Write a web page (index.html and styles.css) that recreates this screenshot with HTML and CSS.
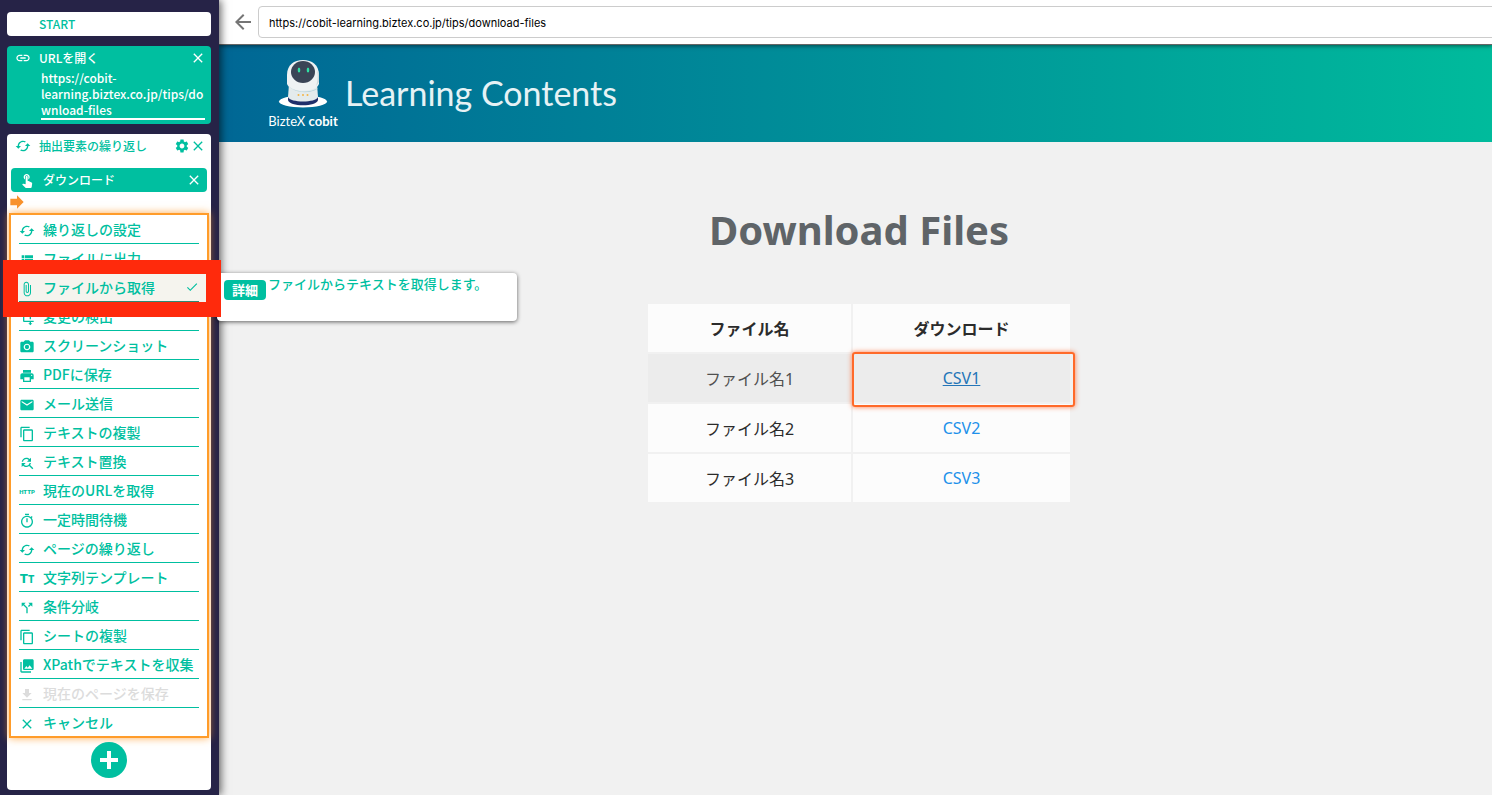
FILE: index.html
```html
<!DOCTYPE html>
<html lang="ja">
<head>
    <meta charset="utf-8">
    <meta name="viewport" content="width=device-width, initial-scale=1">
    <title>BizteX cobit</title>
    <link rel="stylesheet" href="styles.css">
</head>
<body>

<svg class="sprite" aria-hidden="true">
    <symbol id="link" viewBox="0 0 24 24"><path d="M3.9 12c0-1.71 1.39-3.1 3.1-3.1h4V7H7c-2.76 0-5 2.24-5 5s2.24 5 5 5h4v-1.9H7c-1.71 0-3.1-1.39-3.1-3.1zM8 13h8v-2H8v2zm9-6h-4v1.9h4c1.71 0 3.1 1.39 3.1 3.1s-1.39 3.1-3.1 3.1h-4V17h4c2.76 0 5-2.24 5-5s-2.24-5-5-5z"/></symbol>
    <symbol id="close" viewBox="0 0 24 24"><path d="M19 6.41L17.59 5 12 10.59 6.41 5 5 6.41 10.59 12 5 17.59 6.41 19 12 13.41 17.59 19 19 17.59 13.41 12z"/></symbol>
    <symbol id="cached" viewBox="0 0 24 24"><path d="M19 8l-4 4h3c0 3.31-2.69 6-6 6-1.01 0-1.97-.25-2.8-.7l-1.46 1.46C8.97 19.54 10.43 20 12 20c4.42 0 8-3.58 8-8h3l-4-4zM6 12c0-3.31 2.69-6 6-6 1.01 0 1.97.25 2.8.7l1.46-1.46C15.03 4.46 13.57 4 12 4c-4.42 0-8 3.58-8 8H1l4 4 4-4H6z"/></symbol>
    <symbol id="settings" viewBox="0 0 24 24"><path d="M19.14 12.94c.04-.3.06-.61.06-.94 0-.32-.02-.64-.07-.94l2.03-1.58c.18-.14.23-.41.12-.61l-1.92-3.32c-.12-.22-.37-.29-.59-.22l-2.39.96c-.5-.38-1.03-.7-1.62-.94l-.36-2.54c-.04-.24-.24-.41-.48-.41h-3.84c-.24 0-.43.17-.47.41l-.36 2.54c-.59.24-1.13.57-1.62.94l-2.39-.96c-.22-.08-.47 0-.59.22L2.74 8.87c-.12.21-.08.47.12.61l2.03 1.58c-.05.3-.09.63-.09.94s.02.64.07.94l-2.03 1.58c-.18.14-.23.41-.12.61l1.92 3.32c.12.22.37.29.59.22l2.39-.96c.5.38 1.03.7 1.62.94l.36 2.54c.05.24.24.41.48.41h3.84c.24 0 .44-.17.47-.41l.36-2.54c.59-.24 1.13-.56 1.62-.94l2.39.96c.22.08.47 0 .59-.22l1.92-3.32c.12-.22.07-.47-.12-.61l-2.01-1.58zM12 15.6c-1.98 0-3.6-1.62-3.6-3.6s1.62-3.6 3.6-3.6 3.6 1.62 3.6 3.6-1.62 3.6-3.6 3.6z"/></symbol>
    <symbol id="touch" viewBox="0 0 24 24"><path d="M9 11.24V7.5C9 6.12 10.12 5 11.5 5S14 6.12 14 7.5v3.74c1.21-.81 2-2.18 2-3.74C16 5.01 13.99 3 11.5 3S7 5.01 7 7.5c0 1.56.79 2.93 2 3.74zm9.84 4.63l-4.54-2.26c-.17-.07-.35-.11-.54-.11H13v-6c0-.83-.67-1.5-1.5-1.5S10 6.67 10 7.5v10.74l-3.43-.72c-.08-.01-.15-.03-.24-.03-.31 0-.59.13-.79.33l-.79.8 4.94 4.94c.27.27.65.44 1.06.44h6.79c.75 0 1.33-.55 1.44-1.28l.75-5.27c.01-.07.02-.14.02-.2 0-.62-.38-1.16-.91-1.38z"/></symbol>
    <symbol id="forward" viewBox="0 0 24 24"><path d="M12 8V4l8 8-8 8v-4H4V8z"/></symbol>
    <symbol id="list" viewBox="0 0 24 24"><path d="M4 14h4v-4H4v4zm0 5h4v-4H4v4zM4 9h4V5H4v4zm5 5h12v-4H9v4zm0 5h12v-4H9v4zM9 5v4h12V5H9z"/></symbol>
    <symbol id="attach" viewBox="0 0 24 24"><path d="M16.5 6v11.5c0 2.21-1.79 4-4 4s-4-1.79-4-4V5c0-1.38 1.12-2.5 2.5-2.5s2.5 1.12 2.5 2.5v10.5c0 .55-.45 1-1 1s-1-.45-1-1V6H10v9.5c0 1.38 1.12 2.5 2.5 2.5s2.5-1.12 2.5-2.5V5c0-2.21-1.79-4-4-4S7 2.79 7 5v12.5c0 3.04 2.46 5.5 5.5 5.5s5.5-2.46 5.5-5.5V6h-1.5z"/></symbol>
    <symbol id="check" viewBox="0 0 24 24"><path d="M9 16.17L4.83 12l-1.42 1.41L9 19 21 7l-1.41-1.41z"/></symbol>
    <symbol id="transform" viewBox="0 0 24 24"><path d="M22 18v-2H8V4h2L7 1 4 4h2v2H2v2h4v8c0 1.1.9 2 2 2h8v2h-2l3 3 3-3h-2v-2h4zM10 8h6v6h2V8c0-1.1-.9-2-2-2h-6v2z"/></symbol>
    <symbol id="camera" viewBox="0 0 24 24"><circle cx="12" cy="12" r="3.2"/><path d="M9 2L7.17 4H4c-1.1 0-2 .9-2 2v12c0 1.1.9 2 2 2h16c1.1 0 2-.9 2-2V6c0-1.1-.9-2-2-2h-3.17L15 2H9zm3 15c-2.76 0-5-2.24-5-5s2.24-5 5-5 5 2.24 5 5-2.24 5-5 5z"/></symbol>
    <symbol id="print" viewBox="0 0 24 24"><path d="M19 8H5c-1.66 0-3 1.34-3 3v6h4v4h12v-4h4v-6c0-1.66-1.34-3-3-3zm-3 11H8v-5h8v5zm3-7c-.55 0-1-.45-1-1s.45-1 1-1 1 .45 1 1-.45 1-1 1zm-1-9H6v4h12V3z"/></symbol>
    <symbol id="mail" viewBox="0 0 24 24"><path d="M20 4H4c-1.1 0-1.99.9-1.99 2L2 18c0 1.1.9 2 2 2h16c1.1 0 2-.9 2-2V6c0-1.1-.9-2-2-2zm0 4l-8 5-8-5V6l8 5 8-5v2z"/></symbol>
    <symbol id="copy" viewBox="0 0 24 24"><path d="M16 1H4c-1.1 0-2 .9-2 2v14h2V3h12V1zm3 4H8c-1.1 0-2 .9-2 2v14c0 1.1.9 2 2 2h11c1.1 0 2-.9 2-2V7c0-1.1-.9-2-2-2zm0 16H8V7h11v14z"/></symbol>
    <symbol id="replace" viewBox="0 0 24 24"><path d="M11 6c1.38 0 2.63.56 3.54 1.46L12 10h6V4l-2.05 2.05C14.68 4.78 12.93 4 11 4c-3.53 0-6.43 2.61-6.92 6H6.1c.46-2.28 2.48-4 4.9-4zm5.64 9.14c.66-.9 1.12-1.97 1.28-3.14H15.9c-.46 2.28-2.48 4-4.9 4-1.38 0-2.63-.56-3.54-1.46L10 12H4v6l2.05-2.05C7.32 17.22 9.07 18 11 18c1.55 0 2.98-.51 4.14-1.36L20 21.49 21.49 20l-4.85-4.86z"/></symbol>
    <symbol id="timer" viewBox="0 0 24 24"><path d="M15 1H9v2h6V1zm-4 13h2V8h-2v6zm8.03-6.61l1.42-1.42c-.43-.51-.9-.99-1.41-1.41l-1.42 1.42C16.07 4.74 14.12 4 12 4c-4.97 0-9 4.03-9 9s4.02 9 9 9 9-4.03 9-9c0-2.12-.74-4.07-1.97-5.61zM12 20c-3.87 0-7-3.13-7-7s3.13-7 7-7 7 3.13 7 7-3.13 7-7 7z"/></symbol>
    <symbol id="split" viewBox="0 0 24 24"><path d="M14 4l2.29 2.29-2.88 2.88 1.42 1.42 2.88-2.88L20 10V4zm-4 0H4v6l2.29-2.29 4.71 4.7V20h2v-8.41l-5.29-5.3z"/></symbol>
    <symbol id="images" viewBox="0 0 24 24"><path d="M22 16V4c0-1.1-.9-2-2-2H8c-1.1 0-2 .9-2 2v12c0 1.1.9 2 2 2h12c1.1 0 2-.9 2-2zm-11-4l2.03 2.71L16 11l4 5H8l3-4zM2 6v14c0 1.1.9 2 2 2h14v-2H4V6H2z"/></symbol>
    <symbol id="download" viewBox="0 0 24 24"><path d="M19 9h-4V3H9v6H5l7 7 7-7zM5 18v2h14v-2H5z"/></symbol>
    <symbol id="back" viewBox="0 0 24 24"><path d="M20 11H7.83l5.59-5.59L12 4l-8 8 8 8 1.41-1.41L7.83 13H20v-2z"/></symbol>
</svg>

<div class="app">
    <aside class="sidebar">
        <div class="step step-start">START</div>

        <div class="step step-url">
            <div class="step-head">
                <svg class="icon"><use href="#link"/></svg>
                <span class="step-name">URLを開く</span>
                <button class="icon-btn" aria-label="削除"><svg class="icon"><use href="#close"/></svg></button>
            </div>
            <p class="step-value">https://cobit-learning.biztex.co.jp/tips/download-files</p>
        </div>

        <div class="step step-loop">
            <div class="step-head">
                <svg class="icon"><use href="#cached"/></svg>
                <span class="step-name">抽出要素の繰り返し</span>
                <button class="icon-btn" aria-label="設定"><svg class="icon"><use href="#settings"/></svg></button>
                <button class="icon-btn" aria-label="削除"><svg class="icon"><use href="#close"/></svg></button>
            </div>
            <div class="step-child">
                <svg class="icon"><use href="#touch"/></svg>
                <span class="step-name">ダウンロード</span>
                <button class="icon-btn" aria-label="削除"><svg class="icon"><use href="#close"/></svg></button>
            </div>
            <svg class="cursor"><use href="#forward"/></svg>

            <ul class="menu">
                <li><button><svg class="icon"><use href="#cached"/></svg>繰り返しの設定</button></li>
                <li><button><svg class="icon"><use href="#list"/></svg>ファイルに出力</button></li>
                <li class="active">
                    <button><svg class="icon"><use href="#attach"/></svg>ファイルから取得<svg class="check"><use href="#check"/></svg></button>
                    <div class="tooltip"><span class="badge">詳細</span><p>ファイルからテキストを取得します。</p></div>
                    <div class="marker"></div>
                </li>
                <li><button><svg class="icon"><use href="#transform"/></svg>変更の検出</button></li>
                <li><button><svg class="icon"><use href="#camera"/></svg>スクリーンショット</button></li>
                <li><button><svg class="icon"><use href="#print"/></svg>PDFに保存</button></li>
                <li><button><svg class="icon"><use href="#mail"/></svg>メール送信</button></li>
                <li><button><svg class="icon"><use href="#copy"/></svg>テキストの複製</button></li>
                <li><button><svg class="icon"><use href="#replace"/></svg>テキスト置換</button></li>
                <li><button><span class="icon icon-http">HTTP</span>現在のURLを取得</button></li>
                <li><button><svg class="icon"><use href="#timer"/></svg>一定時間待機</button></li>
                <li><button><svg class="icon"><use href="#cached"/></svg>ページの繰り返し</button></li>
                <li><button><span class="icon icon-text">T<small>T</small></span>文字列テンプレート</button></li>
                <li><button><svg class="icon"><use href="#split"/></svg>条件分岐</button></li>
                <li><button><svg class="icon"><use href="#copy"/></svg>シートの複製</button></li>
                <li><button><svg class="icon"><use href="#images"/></svg>XPathでテキストを収集</button></li>
                <li><button disabled><svg class="icon"><use href="#download"/></svg>現在のページを保存</button></li>
                <li><button><svg class="icon"><use href="#close"/></svg>キャンセル</button></li>
            </ul>

            <button class="add" aria-label="追加">
                <svg viewBox="0 0 36 36"><path d="M16 9h4v7h7v4h-7v7h-4v-7H9v-4h7z"/></svg>
            </button>
        </div>
    </aside>

    <main class="browser">
        <div class="toolbar">
            <button class="back" aria-label="戻る"><svg><use href="#back"/></svg></button>
            <input class="address" type="text" aria-label="URL" value="https://cobit-learning.biztex.co.jp/tips/download-files">
        </div>

        <header class="hero">
            <div class="logo">
                <svg class="robot" viewBox="0 0 50 50">
                    <ellipse cx="25" cy="42.5" rx="24" ry="6" fill="#fff"/>
                    <path d="M10 37v4c1 7 29 7 30 0v-4z" fill="#1f2f6b"/>
                    <path d="M11 25L10 38c2 6 28 6 30 0l-1-13z" fill="#e4ebec"/>
                    <path d="M9 16C9 6 16 1 25 1s16 5 16 15v9c-3 9-29 9-32 0z" fill="#eef2f3"/>
                    <path d="M10 26c5 7 20 9 30 3-5 6-24 6-30-3z" fill="#b7d3da"/>
                    <path d="M37 8c4 5 3 13 1 19l3-4v-8z" fill="#cfdadd"/>
                    <ellipse cx="25" cy="13" rx="12" ry="11" fill="#3a4556"/>
                    <ellipse cx="21" cy="11" rx="1.3" ry="2.5" fill="#2fe0a4"/>
                    <ellipse cx="30" cy="11" rx="1.3" ry="2.5" fill="#2fe0a4"/>
                    <g fill="#f5b545"><circle cx="20.5" cy="36" r="1"/><circle cx="25" cy="36" r="1"/><circle cx="29.5" cy="36" r="1"/></g>
                </svg>
                <span class="logo-name">BizteX <b>cobit</b></span>
            </div>
            <span class="hero-title">Learning Contents</span>
        </header>

        <section class="content">
            <h1>Download Files</h1>
            <table class="files">
                <thead>
                    <tr><th>ファイル名</th><th>ダウンロード</th></tr>
                </thead>
                <tbody>
                    <tr class="hover"><td>ファイル名1</td><td class="picked"><a href="#">CSV1</a></td></tr>
                    <tr><td>ファイル名2</td><td><a href="#">CSV2</a></td></tr>
                    <tr><td>ファイル名3</td><td><a href="#">CSV3</a></td></tr>
                </tbody>
            </table>
        </section>
    </main>
</div>

</body>
</html>
```
FILE: styles.css
```css
* {
    box-sizing: border-box;
}

body {
    margin: 0;
    background: #f1f1f1;
    font-family: "Noto Sans CJK JP", sans-serif;
}

button {
    margin: 0;
    padding: 0;
    border: 0;
    background: none;
    color: inherit;
    font: inherit;
    cursor: pointer;
}

p {
    margin: 0;
}

svg {
    fill: currentColor;
}

.sprite {
    display: none;
}

.app {
    display: flex;
    min-height: 100vh;
}

/* sidebar */
.sidebar {
    position: relative;
    z-index: 2;
    flex: none;
    display: flex;
    flex-direction: column;
    gap: 10px;
    width: 219px;
    padding: 12px 8px 5px 7px;
    background: #262347;
    color: #00bfa0;
    font-size: 12px;
    font-weight: 500;
    box-shadow: 2px 0 8px rgba(0, 0, 0, 0.6);
}

.icon {
    flex: none;
    width: 16px;
    height: 16px;
}

.step {
    border-radius: 4px;
    background: #fff;
}

.step-start {
    padding-left: 32px;
    line-height: 24px;
}

.step-head,
.step-child {
    display: flex;
    align-items: center;
    height: 24px;
    padding: 0 5px 0 8px;
}

.step-name {
    flex: 1;
    margin-left: 8px;
    padding-bottom: 2px;
}

.icon-btn {
    display: flex;
}

.step-url {
    padding-bottom: 4px;
    background: #00bfa0;
    color: #fff;
}

.step-value {
    margin: 0 6px 0 34px;
    border-bottom: 2px solid #fff;
    line-height: 16px;
    overflow-wrap: anywhere;
}

.step-loop {
    display: flex;
    flex-direction: column;
    padding-bottom: 12px;
}

.step-child {
    margin: 10px 4px 0;
    border-radius: 4px;
    background: #00bfa0;
    color: #fff;
}

.cursor {
    width: 20px;
    height: 20px;
    color: #f8922d;
}

.menu {
    margin: 1px 2px 4px;
    padding: 0;
    border: 2px solid #ff9c2a;
    background: #fff;
    box-shadow: 0 0 8px rgba(255, 152, 40, 0.8);
    font-size: 14px;
    list-style: none;
}

.menu li {
    position: relative;
    padding: 0 8px;
}

.menu button {
    display: flex;
    align-items: center;
    gap: 8px;
    width: 100%;
    height: 29px;
    border-bottom: 1px solid #00bfa0;
    white-space: nowrap;
}

.menu li:last-child button {
    height: 28px;
    border-bottom: 0;
}

.menu button:disabled {
    color: #dcdcdc;
}

.menu .icon {
    margin-top: 3px;
}

.menu .check {
    margin-left: auto;
    width: 14px;
    height: 14px;
}

.icon-http {
    font: 900 6px/16px Roboto, sans-serif;
}

.icon-text {
    font: 900 13px/16px Roboto, sans-serif;
    text-align: center;
}

.icon-text small {
    font-size: 10px;
}

.menu .active {
    z-index: 1;
    background: #f5f4ee;
}

.menu .active button {
    border-color: #2c8a72;
}

.marker {
    position: absolute;
    inset: -13px -14px -15px -8px;
    border: 15px solid #ff2a0c;
    border-top-width: 14px;
}

.tooltip {
    position: absolute;
    top: 0;
    left: 206px;
    display: flex;
    align-items: flex-start;
    gap: 2px;
    width: 300px;
    height: 48px;
    padding: 0 7px;
    border-radius: 4px;
    background: #fff;
    box-shadow: 0 1px 4px rgba(0, 0, 0, 0.6);
    font-size: 13px;
    line-height: 22px;
}

.badge {
    margin-top: 7px;
    padding: 0 8px;
    border-radius: 4px;
    background: #00bfa0;
    color: #fff;
    font-weight: bold;
    line-height: 20px;
}

.add {
    align-self: center;
    display: flex;
    width: 36px;
    height: 36px;
    border-radius: 50%;
    background: #00bfa0;
    color: #fff;
}

/* recorded browser */
.browser {
    flex: 1;
    min-width: 0;
    overflow: hidden;
}

.toolbar {
    position: relative;
    display: flex;
    align-items: center;
    height: 45px;
    padding-left: 12px;
    border-bottom: 1px solid #666;
    background: #fff;
    box-shadow: 0 1px 4px rgba(0, 0, 0, 0.5);
}

.back {
    width: 24px;
    height: 24px;
    color: #757575;
}

.back svg {
    width: 24px;
    height: 24px;
}

.address {
    flex: 1;
    height: 32px;
    margin: 0 -4px 0 3px;
    padding: 2px 10px 0;
    border: 1px solid #ccc;
    border-radius: 4px;
    color: #000;
    font: 11px Inter, sans-serif;
}

.hero {
    display: flex;
    align-items: center;
    gap: 6px;
    height: 97px;
    padding-left: 48px;
    background: linear-gradient(to right, #006795, #00bb9c);
}

.logo {
    display: flex;
    flex-direction: column;
    align-items: center;
    width: 72px;
    padding-top: 4px;
    color: #fff;
}

.robot {
    width: 50px;
    height: 50px;
}

.logo-name {
    font: 13px/24px Lato, sans-serif;
    white-space: nowrap;
}

.hero-title {
    padding-bottom: 3px;
    color: #e6f2f5;
    font: 34px Lato, sans-serif;
}

.content {
    display: flex;
    flex-direction: column;
    align-items: center;
    padding: 60px 0 0 7px;
    font-family: "Noto Sans", "Noto Sans CJK JP", sans-serif;
}

.content h1 {
    margin: 0 0 44px;
    color: #5f6468;
    font-size: 40px;
    line-height: 56px;
}

.files {
    border-spacing: 2px;
    color: #2b2b2b;
    font-size: 16px;
    text-align: center;
}

.files th,
.files td {
    width: 203px;
    height: 48px;
    padding: 0;
    background: #fcfcfc;
}

.files th + th,
.files td + td {
    width: 217px;
}

.files .hover td {
    background: #ececec;
    color: #505050;
}

.files a {
    color: #2090ea;
    text-decoration: none;
}

.files .hover a {
    color: #2475b8;
    text-decoration: underline;
}

.picked {
    position: relative;
}

.picked::after {
    content: "";
    position: absolute;
    inset: -2px -5px -5px -1px;
    border: 2px solid #ff6a2a;
    border-radius: 3px;
    box-shadow: 0 0 5px rgba(255, 90, 30, 0.8);
    pointer-events: none;
}
```
